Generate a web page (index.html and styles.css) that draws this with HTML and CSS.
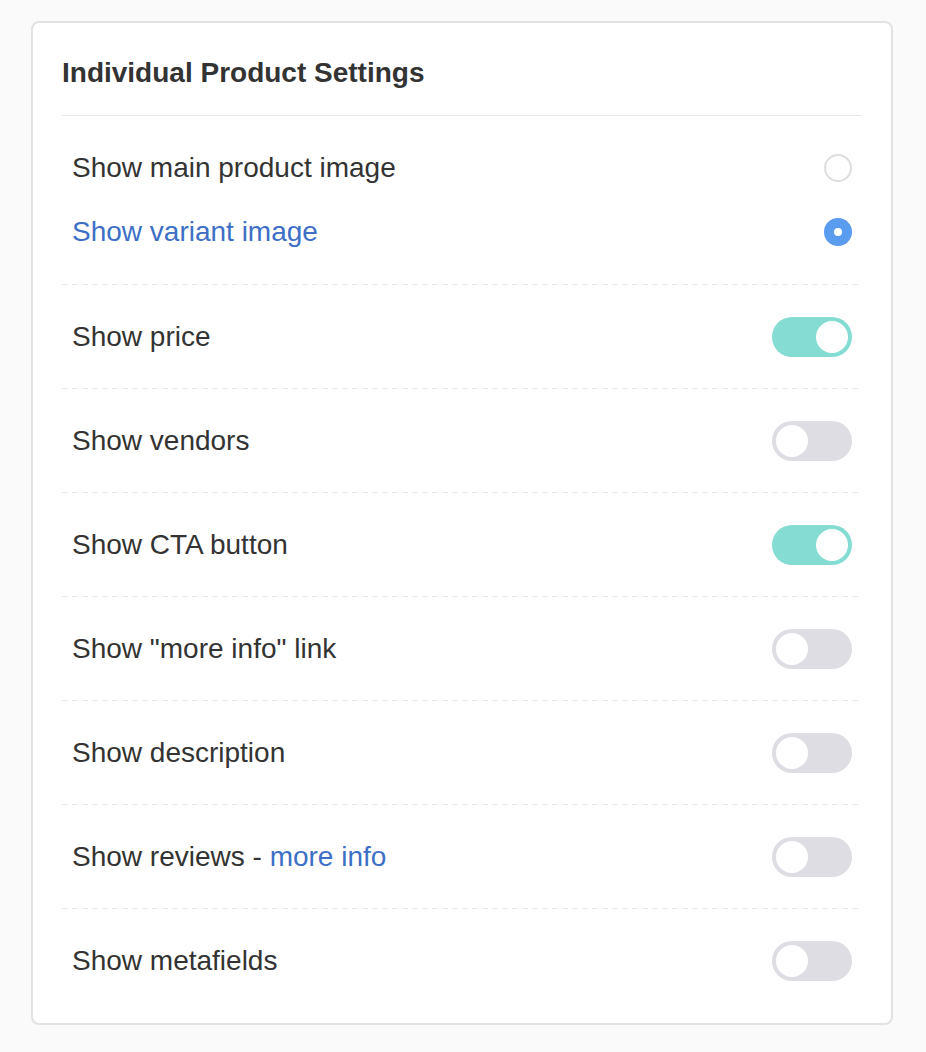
FILE: index.html
```html
<!DOCTYPE html>
<html lang="en">
<head>
    <meta charset="UTF-8">
    <meta name="viewport" content="width=device-width, initial-scale=1.0">
    <title>Individual Product Settings</title>
    <link rel="stylesheet" href="styles.css">
</head>
<body>
    <div class="card">
        <div class="card-header">
            <h2>Individual Product Settings</h2>
        </div>

        <div class="radio-group">
            <label class="radio-row">
                <span>Show main product image</span>
                <span class="radio"></span>
            </label>
            <label class="radio-row selected">
                <span>Show variant image</span>
                <span class="radio"></span>
            </label>
        </div>

        <div class="setting-row">
            <span>Show price</span>
            <span class="toggle on"><span class="knob"></span></span>
        </div>
        <div class="setting-row">
            <span>Show vendors</span>
            <span class="toggle"><span class="knob"></span></span>
        </div>
        <div class="setting-row">
            <span>Show CTA button</span>
            <span class="toggle on"><span class="knob"></span></span>
        </div>
        <div class="setting-row">
            <span>Show "more info" link</span>
            <span class="toggle"><span class="knob"></span></span>
        </div>
        <div class="setting-row">
            <span>Show description</span>
            <span class="toggle"><span class="knob"></span></span>
        </div>
        <div class="setting-row">
            <span>Show reviews - <a href="#" class="link">more info</a></span>
            <span class="toggle"><span class="knob"></span></span>
        </div>
        <div class="setting-row">
            <span>Show metafields</span>
            <span class="toggle"><span class="knob"></span></span>
        </div>
    </div>
</body>
</html>
```

FILE: styles.css
```css
* {
    margin: 0;
    padding: 0;
    box-sizing: border-box;
    font-family: 'Liberation Sans', Arial, sans-serif;
}

body {
    background-color: #fafafa;
    color: #333;
    padding: 21px 33px 28px 31px;
}

.card {
    background-color: white;
    border: 2px solid #e2e2e2;
    border-radius: 8px;
    width: 862px;
    padding: 0 29px 10px;
}

.card-header {
    padding: 34px 0 26px;
    border-bottom: 1px solid #e8e8e8;
}

h2 {
    font-size: 28px;
    line-height: 32px;
    font-weight: bold;
    color: #333;
}

/* dashed separator drawn as a background so the dash length matches */
.radio-group,
.setting-row {
    background: linear-gradient(to right, #e8e8e8 60%, transparent 0) left bottom / 10px 1px repeat-x;
}

.radio-group {
    padding: 20px 0 21px;
}

.radio-row {
    display: flex;
    align-items: center;
    justify-content: space-between;
    height: 64px;
    padding: 0 10px;
    font-size: 28px;
    cursor: pointer;
}

.radio-row.selected {
    color: #3d6fc6;
}

.radio {
    width: 28px;
    height: 28px;
    border: 2px solid #dedede;
    border-radius: 50%;
    display: flex;
    align-items: center;
    justify-content: center;
}

.selected .radio {
    background-color: #5a9cf0;
    border-color: #5a9cf0;
}

.selected .radio::after {
    content: "";
    width: 8px;
    height: 8px;
    border-radius: 50%;
    background-color: white;
}

.setting-row {
    display: flex;
    align-items: center;
    justify-content: space-between;
    height: 104px;
    padding: 0 10px 1px;
    font-size: 28px;
}

.setting-row:last-child {
    background: none;
}

.link {
    color: #3d6fc6;
    text-decoration: none;
}

.toggle {
    display: flex;
    align-items: center;
    width: 80px;
    height: 40px;
    padding: 4px;
    border-radius: 20px;
    background-color: #dddde3;
}

.toggle.on {
    background-color: #84dcd2;
    justify-content: flex-end;
}

.knob {
    width: 32px;
    height: 32px;
    border-radius: 50%;
    background-color: white;
}
```
